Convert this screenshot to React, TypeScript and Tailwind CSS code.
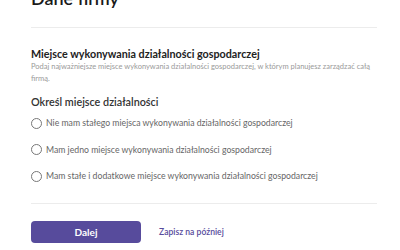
import React, { useState } from 'react';

const options = [
  'Nie mam stałego miejsca wykonywania działalności gospodarczej',
  'Mam jedno miejsce wykonywania działalności gospodarczej',
  'Mam stałe i dodatkowe miejsce wykonywania działalności gospodarczej',
];

const App: React.FC = () => {
  const [selected, setSelected] = useState<number | null>(null);

  return (
    <div className="w-[400px] h-[250px] overflow-hidden bg-white text-[#333] font-['Lato',sans-serif]">
      <div className="pl-[31px] pr-[23px]">
        <h1 className="text-[18px] leading-[24px] font-semibold text-[#1a1a1a] mt-[-14px]">Dane firmy</h1>
        <div className="mt-[17px] border-t border-[#ececec]" />

        <h2 className="mt-[19px] text-[10.75px] leading-[14px] font-bold text-[#222]">
          Miejsce wykonywania działalności gospodarczej
        </h2>
        <p className="mr-[-5px] text-[7.5px] leading-[12px] text-[#9a9a9a]">
          Podaj najważniejsze miejsce wykonywania działalności gospodarczej, w którym planujesz zarządzać całą firmą.
        </p>

        <h3 className="mt-[10px] text-[10.8px] leading-[14px] font-semibold text-[#333]">Określ miejsce działalności</h3>

        <div className="mt-[7px] flex flex-col gap-[12.5px]">
          {options.map((label, i) => (
            <button
              key={label}
              onClick={() => setSelected(i)}
              className="flex items-center gap-[4px] h-[14px] text-left"
            >
              <span className="w-[11px] h-[11px] rounded-full border border-[#777] flex items-center justify-center">
                {selected === i && <span className="w-[5px] h-[5px] rounded-full bg-[#574b9c]" />}
              </span>
              <span className="text-[8.7px] text-[#666]">{label}</span>
            </button>
          ))}
        </div>

        <div className="mt-[20px] border-t border-[#ececec]" />

        <div className="mt-[17px] flex items-center gap-[18px]">
          <button className="w-[110px] h-[22px] rounded-[4px] bg-[#574b9c] text-white text-[10px] font-bold">
            Dalej
          </button>
          <button className="text-[8.6px] font-semibold text-[#574b9c]">Zapisz na później</button>
        </div>
      </div>
    </div>
  );
};

export default App;
